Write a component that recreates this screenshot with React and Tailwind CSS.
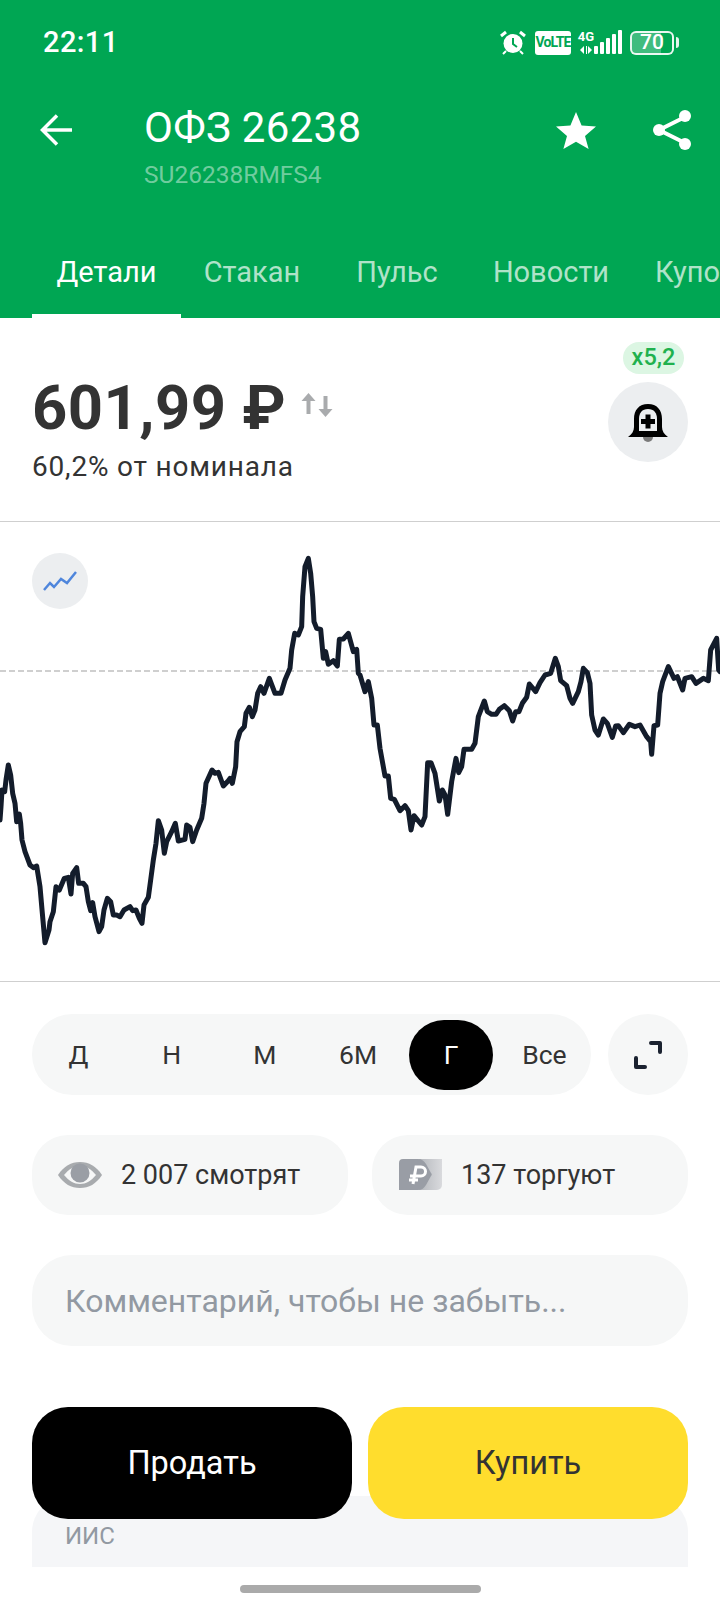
import React from "react";

// Chart points traced from the reference, in 3x pixels
const chartPoints =
  "0,840 3,800 6,750 14,755 18,720 25,675 32,705 38,760 45,790 50,845 58,822 62,850 66,900 75,935 90,975 100,983 110,978 120,1040 127,1120 135,1208 147,1170 150,1145 160,1115 168,1040 178,1050 193,1015 205,1012 213,1062 218,1000 230,983 236,1030 250,1030 258,1040 265,1085 272,1112 278,1088 285,1130 297,1175 305,1160 312,1110 322,1075 332,1085 340,1125 350,1125 360,1130 372,1110 390,1100 398,1112 408,1110 418,1135 426,1150 432,1095 445,1072 452,1020 460,960 468,910 475,842 485,870 493,940 500,905 515,875 526,850 535,903 555,898 560,855 570,862 578,905 590,870 605,835 612,790 618,730 636,690 645,700 655,697 670,738 685,722 690,715 697,730 707,680 711,605 720,575 733,560 738,520 748,502 757,530 765,510 773,460 782,440 792,460 808,415 825,460 843,460 855,420 870,385 875,330 884,280 895,285 905,260 908,170 915,80 925,55 932,100 938,170 942,245 950,265 962,268 970,355 977,335 985,373 1000,362 1012,378 1018,298 1030,297 1045,280 1060,335 1070,328 1075,400 1080,405 1095,455 1105,425 1115,475 1122,555 1132,555 1140,625 1155,708 1165,708 1172,775 1183,778 1200,812 1215,797 1225,812 1233,870 1242,827 1265,855 1275,830 1283,668 1293,668 1305,700 1318,783 1327,750 1335,765 1343,823 1355,725 1368,655 1376,698 1385,680 1392,628 1415,628 1425,610 1435,530 1453,483 1462,515 1475,523 1488,523 1498,508 1513,497 1528,512 1538,543 1547,515 1557,515 1567,490 1580,472 1588,432 1607,455 1620,428 1635,405 1652,400 1666,355 1675,380 1682,422 1700,437 1710,475 1718,490 1735,455 1743,425 1750,385 1762,398 1770,430 1775,525 1785,570 1795,585 1810,537 1822,550 1837,592 1847,558 1855,557 1870,578 1888,553 1905,560 1920,555 1940,590 1952,605 1955,643 1962,557 1973,555 1980,460 1988,425 2005,380 2022,415 2032,410 2048,450 2055,415 2075,410 2088,430 2110,415 2125,422 2132,330 2150,295 2156,390 2160,395";

const tabs = [
  { label: "Детали", box: "w-[149px] text-center text-white border-b-4 border-white" },
  { label: "Стакан", box: "w-[142px] text-center text-white/70 border-b-4 border-transparent" },
  { label: "Пульс", box: "w-[148px] text-center text-white/70 border-b-4 border-transparent" },
  { label: "Новости", box: "w-[160px] text-center text-white/70 border-b-4 border-transparent" },
  { label: "Купоны", box: "w-[90px] pl-6 text-white/70 border-b-4 border-transparent" },
];

const periods = ["Д", "Н", "М", "6М", "Г", "Все"];

const StatusIcons = () => (
  <div className="flex items-center text-white">
    <svg width="26" height="25" viewBox="0 0 26 25" fill="none">
      <circle cx="13" cy="13.5" r="9.5" fill="#fff" />
      <path d="M13 8v6l4 3" stroke="#00a653" strokeWidth="2" />
      <path d="M1 6l5-4M25 6l-5-4" stroke="#fff" strokeWidth="3" />
      <path d="M6 21l-3 3M20 21l3 3" stroke="#fff" strokeWidth="2" />
    </svg>
    <div className="ml-[9px] flex h-6 w-9 items-center justify-center rounded-[3px] bg-white text-[14px] font-bold tracking-[-0.9px] text-[#00a653]">
      VoLTE
    </div>
    <div className="ml-[7px] flex w-4 flex-col items-center self-start">
      <span className="text-[13px] leading-[13px] font-bold">4G</span>
      <svg width="12" height="8" viewBox="0 0 12 8" className="mt-[3px]" fill="#fff">
        <path d="M4 0v8L0 4zM6 0h1v8H6zM8 0l4 4-4 4z" />
      </svg>
    </div>
    <svg width="28" height="25" viewBox="0 0 28 25" fill="#fff">
      <rect x="0" y="16" width="4" height="8" rx="1" />
      <rect x="6" y="12" width="4" height="12" rx="1" />
      <rect x="12" y="8" width="4" height="16" rx="1" />
      <rect x="18" y="4" width="4" height="20" rx="1" />
      <rect x="24" y="0" width="4" height="24" rx="1" />
    </svg>
    <div className="ml-[8px] flex items-center">
      <div className="flex h-6 w-[44px] items-center justify-center rounded-[6px] border-2 border-white/90 bg-[linear-gradient(90deg,rgba(255,255,255,0.25)_72%,transparent_72%)] text-[21px] leading-none font-medium">
        70
      </div>
      <div className="ml-[2px] h-[11px] w-[3px] rounded-r-sm bg-white/90" />
    </div>
  </div>
);

const App = () => {
  return (
    <div className="relative h-[1610px] w-[720px] overflow-hidden bg-white [font-family:Roboto,sans-serif] text-[#333]">
      {/* Header */}
      <header className="flex h-[318px] flex-col bg-[#00a653] text-white">
        <div className="flex h-[84px] items-center justify-between pt-[1px] pr-[41px] pl-[43px]">
          <span className="text-[29px] leading-none font-medium tracking-[0.4px]">22:11</span>
          <StatusIcons />
        </div>
        <div className="flex items-start pt-5 pr-[29px] pl-[40px]">
          <svg width="33" height="32" viewBox="0 0 33 32" fill="none" className="mt-[10px]" stroke="#fff" strokeWidth="3.5">
            <path d="M32 16H3M17 1.5L2.5 16 17 30.5" />
          </svg>
          <div className="ml-[71px] flex-1">
            <div className="text-[42px] leading-[48px] tracking-[0.3px]">ОФЗ 26238</div>
            <div className="mt-[7px] text-[24.5px] leading-[32px] text-white/45">SU26238RMFS4</div>
          </div>
          <svg width="40" height="37" viewBox="0 0 40 37" fill="#fff" className="mt-[8px]">
            <path d="M20 0l5.6 13.6 14.4 1-11 9.4 3.6 13L20 29.8 7.4 37l3.6-13L0 14.6l14.4-1z" />
          </svg>
          <svg width="38" height="40" viewBox="0 0 38 40" fill="none" className="mt-[6px] ml-[57px]">
            <path d="M32 7L6 20l26 13" stroke="#fff" strokeWidth="4" />
            <circle cx="32" cy="6" r="6" fill="#fff" />
            <circle cx="6" cy="20" r="6" fill="#fff" />
            <circle cx="32" cy="34" r="6" fill="#fff" />
          </svg>
        </div>
        <nav className="mt-auto flex pl-8 text-[29px] leading-[34px] whitespace-nowrap">
          {tabs.map((tab) => (
            <div key={tab.label} className={`${tab.box} h-[72px] flex-none pt-[9px]`}>
              {tab.label}
            </div>
          ))}
        </nav>
      </header>

      {/* Price */}
      <section className="flex h-[204px] justify-between border-b border-[#cfcfcf] pr-8 pl-8">
        <div className="pt-[55px]">
          <div className="flex items-start">
            <span className="text-[61.5px] leading-[70px] font-bold tracking-[0.5px]">601,99 ₽</span>
            <svg width="32" height="24" viewBox="0 0 31 24" fill="#a9abad" className="mt-[20px] ml-[15px]">
              <path d="M7 0l7 8H9v13H5V8H0zM24 24l7-8h-5V3h-4v13h-5z" />
            </svg>
          </div>
          <div className="mt-[8px] text-[28px] leading-[32px] tracking-[0.8px]">60,2% от номинала</div>
        </div>
        <div className="flex flex-col items-center pt-6">
          <div className="ml-[11px] flex h-8 w-[61px] items-center justify-center rounded-full bg-[#dcf6e3] text-[23.5px] font-medium text-[#1fb14e]">
            x5,2
          </div>
          <div className="mt-2 flex h-20 w-20 items-center justify-center rounded-full bg-[#eceef0]">
            <svg width="40" height="40" viewBox="0 0 40 40">
              <circle cx="20" cy="35" r="5" fill="#7a7a7a" />
              <path d="M0 35c4-3 6-6 6-10V17C6 8 11 2 20 2s14 6 14 15v8c0 4 2 7 6 10z" fill="#000" />
              <path d="M11 29c0-1 0-3 0-5v-7c0-6 3-10 9-10s9 4 9 10v7c0 2 0 4 0 5z" fill="#eceef0" />
              <path d="M17.500 12.500h5v4.500H27v5h-4.500v4.500h-5V22H13v-5h4.500z" fill="#000" />
            </svg>
          </div>
        </div>
      </section>

      {/* Chart */}
      <section className="relative h-[460px] border-b border-[#cfcfcf]">
        <svg viewBox="0 -54 2160 1377" className="block h-[459px] w-[720px]" fill="none">
          <path d="M0 393H2160" stroke="#c0c0c0" strokeWidth="4" strokeDasharray="18 9" />
          <polyline points={chartPoints} stroke="#131c2b" strokeWidth="15" strokeLinejoin="round" strokeLinecap="round" />
        </svg>
        <div className="absolute top-[31px] left-8 flex h-14 w-14 items-center justify-center rounded-full bg-[#eceef0]">
          <svg width="34" height="22" viewBox="0 0 34 22" fill="none" stroke="#4f86dc" strokeWidth="2.500">
            <path d="M1 20l6-7 4 4 7-8 6 4 9-11" />
          </svg>
        </div>
      </section>

      {/* Controls */}
      <section className="px-8 pt-8">
        <div className="flex justify-between">
          <div className="grid h-[81px] w-[559px] grid-cols-6 items-center rounded-full bg-[#f6f7f7] text-[26.5px]">
            {periods.map((period) =>
              period === "Г" ? (
                <div key={period} className="mx-auto flex h-[70px] w-[84px] items-center justify-center rounded-full bg-black text-white">
                  {period}
                </div>
              ) : (
                <div key={period} className="text-center">
                  {period}
                </div>
              ),
            )}
          </div>
          <div className="flex h-[81px] w-20 items-center justify-center rounded-full bg-[#f6f7f7]">
            <svg width="28" height="28" viewBox="0 0 28 28" fill="none" stroke="#1b2230" strokeWidth="4" strokeLinecap="round" strokeLinejoin="round">
              <path d="M17 2h9v9M2 17v9h9" />
            </svg>
          </div>
        </div>

        <div className="mt-[40px] flex justify-between text-[27px]">
          <div className="flex h-20 w-[316px] items-center rounded-[36px] bg-[#f6f7f7] pl-[26px]">
            <svg width="44" height="26" viewBox="0 0 44 26">
              <path d="M0 13C6 4 13 0 22 0s16 4 22 13c-6 9-13 13-22 13S6 22 0 13z" fill="#a8abae" />
              <path d="M6 13c5-6 10-9 16-9s11 3 16 9c-5 6-10 9-16 9S11 19 6 13z" fill="#f6f7f7" />
              <circle cx="22" cy="11" r="9.500" fill="#9a9ea5" />
            </svg>
            <span className="ml-[19px]">2 007 смотрят</span>
          </div>
          <div className="flex h-20 w-[316px] items-center rounded-[36px] bg-[#f6f7f7] pl-[27px]">
            <svg width="44" height="32" viewBox="0 0 44 32" fill="none">
              <defs>
                <linearGradient id="tail" x1="0" x2="1" y1="0" y2="0">
                  <stop offset="0" stopColor="#b5b8bd" />
                  <stop offset="1" stopColor="#d9dadd" />
                </linearGradient>
              </defs>
              <path d="M20 0H43V26a5 5 0 0 1-5 5H20z" fill="url(#tail)" />
              <path d="M4 0h15c4 0 6 2 8 5l5 9c1 1 1 2 0 3l-5 9c-2 3-4 5-8 5H0V4a4 4 0 0 1 4-4z" fill="#999da5" />
              <path d="M14 25l3-17h5a4.500 4.500 0 0 1 0 9H11M10 21h9" stroke="#fff" strokeWidth="3" />
            </svg>
            <span className="ml-[18px]">137 торгуют</span>
          </div>
        </div>

        <div className="mt-[40px] flex h-[91px] items-center rounded-[40px] bg-[#f6f7f7] pl-[33px] text-[32px] text-[#9299a2]">
          Комментарий, чтобы не забыть...
        </div>

        {/* Account card under the order buttons */}
        <div className="relative mt-[150px] h-[71px] rounded-t-[36px] bg-[#f5f6f8] pt-[26px] pl-[33px] text-[24px] leading-[28px] text-[#9299a2]">
          ИИС
          <div className="absolute -top-[89px] right-0 left-0 flex justify-between text-[32.5px]">
            <div className="flex h-28 w-[320px] items-center justify-center rounded-[36px] bg-black text-white">Продать</div>
            <div className="flex h-28 w-[320px] items-center justify-center rounded-[36px] bg-[#ffdd2d] text-[#333]">Купить</div>
          </div>
        </div>
      </section>

      {/* Home indicator */}
      <div className="mx-auto mt-[18px] h-2 w-[241px] rounded-full bg-[#aaaaaa]" />
    </div>
  );
};

export default App;
